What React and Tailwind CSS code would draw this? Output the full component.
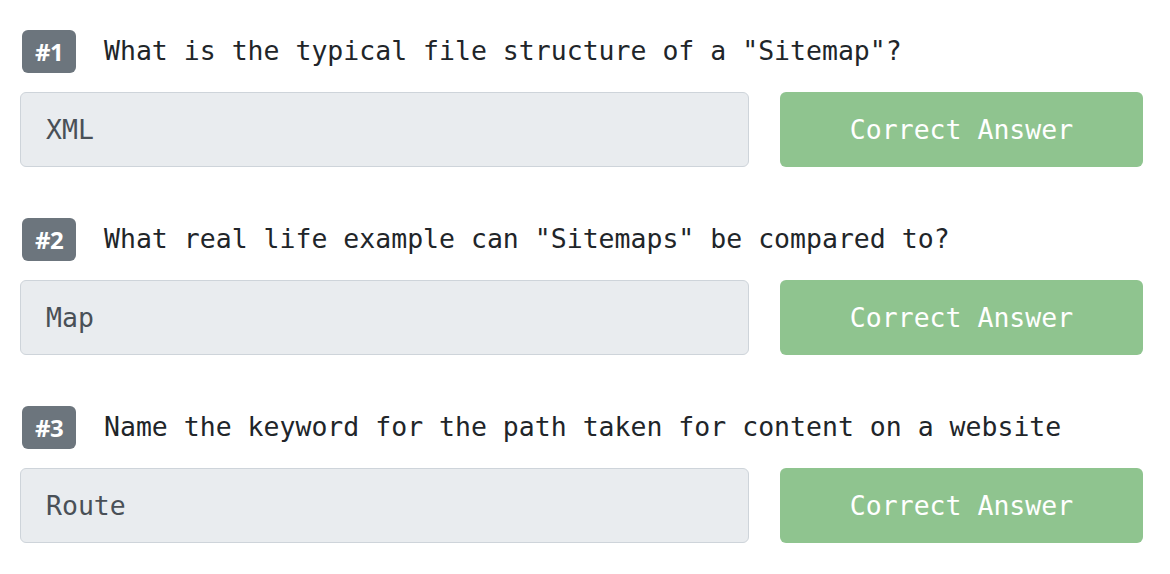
import React from "react";

const items = [
  { n: 1, q: 'What is the typical file structure of a "Sitemap"?', a: "XML" },
  { n: 2, q: 'What real life example can "Sitemaps" be compared to?', a: "Map" },
  { n: 3, q: "Name the keyword for the path taken for content on a website", a: "Route" },
];

const mono = { fontFamily: '"DejaVu Sans Mono", "Liberation Mono", monospace' };

export default function App() {
  return (
    <div className="w-[1170px] h-[574px] bg-white pt-[30px] pl-[20px] flex flex-col gap-[51px]" style={mono}>
      {items.map((it) => (
        <div key={it.n} className="flex flex-col gap-[19px]">
          <div className="flex items-center pl-[2px]">
            <div
              className="w-[54px] h-[43px] rounded-[6px] bg-[#6c757d] text-white flex items-center justify-center font-bold text-[24px] leading-none tracking-[-0.5px]"
              style={{ fontFamily: '"Open Sans", "DejaVu Sans", sans-serif' }}
            >
              #{it.n}
            </div>
            <div className="ml-[28px] text-[26.5px] leading-none text-[#212529] whitespace-pre">{it.q}</div>
          </div>
          <div className="flex gap-[31px]">
            <div className="w-[729px] h-[75px] rounded-[6px] bg-[#e9ecef] border border-[#ced4da] flex items-center pl-[25px] text-[26.5px] text-[#495057]">
              {it.a}
            </div>
            <div className="w-[363px] h-[75px] rounded-[6px] bg-[#8fc48f] flex items-center justify-center text-[26.5px] text-white">
              Correct Answer
            </div>
          </div>
        </div>
      ))}
    </div>
  );
}
